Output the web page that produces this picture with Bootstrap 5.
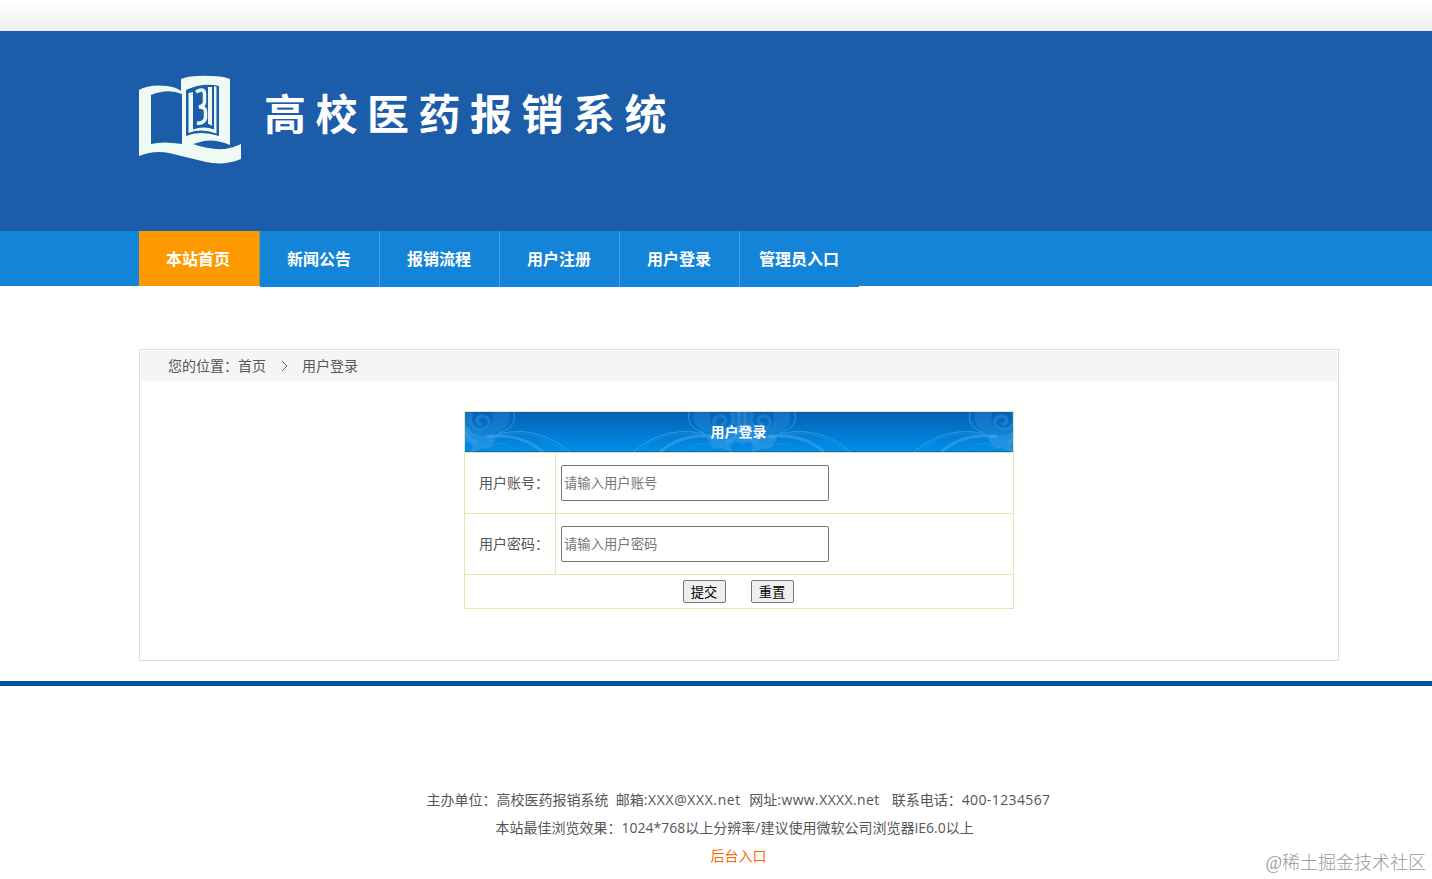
<!DOCTYPE html>
<html lang="zh-CN">
<head>
<meta charset="utf-8">
<meta name="viewport" content="width=device-width, initial-scale=1">
<title>高校医药报销系统</title>
<link href="https://cdn.jsdelivr.net/npm/bootstrap@5.3.0/dist/css/bootstrap.min.css" rel="stylesheet">
<style>
body{font:14px/28px "Open Sans","Noto Sans CJK SC",sans-serif;color:#555;height:879px;overflow:hidden;background:#fff}
.page-w{width:1200px;margin-left:139px}
.topbar{height:31px;background:linear-gradient(#fff,#eee)}
.masthead{height:200px;background:#1b5da8}
.site-title{font:700 42px/60px "Noto Sans CJK SC",sans-serif;letter-spacing:9.5px;color:#fff;margin:51px 0 0 23px;white-space:nowrap}
.logo{margin-top:44px}
.menu{height:55px;background:#1384d7}
.menu .nav-link{width:120px;height:56px;padding:0 1px 0 0;font:700 16px/54px "Noto Sans CJK SC",sans-serif;color:#fff;text-align:center;background:#1384d7;border-right:1px solid #43a3e8;border-radius:0}
.menu .nav-link.active{background:#f90;height:55px;width:121px;padding-right:2px;border-color:#8a9b68}
.menu .nav-link:last-child{border-right:0;width:119px}
.panel{height:312px;margin-top:63px;border:1px solid #ddd}
.crumbs{height:30px;margin:1px;padding-left:27px;background:#f5f5f5;color:#555}
.crumbs span{line-height:28px;margin-top:-1px}
.crumbs svg{margin:0 14px 0 15px}
.login{width:550px;height:198px;margin:30px auto 0;border:1px solid #e3e6b4;position:relative}
.login-head{height:40px;background:linear-gradient(#0561b4,#018ee9);border-bottom:1px solid #0967b2}
.login-head svg{inset:0;position:absolute}
.login-head strong{position:relative;display:block;line-height:39px;padding-right:1px;color:#fff}
.field-row{height:61px;border-bottom:1px solid #e3e6b4}
.login-head + .field-row{height:62px;border-top:1px solid #e3e6b4}
.field-row label{width:91px;height:60px;line-height:60px;padding-left:14px;border-right:1px solid #e3e6b4}
.field-row input{width:268px;height:36px;margin:0 0 0 5px;padding:1px 2px;border:1px solid #767676;border-radius:2px;font-size:13.333px;line-height:20px;color:#333}
.field-row input::placeholder{color:#757575;opacity:1}
.buttons{gap:25px;padding:5px 2px 0 0}
.btn-plain{width:43px;height:23px;padding:0;border:1px solid #767676;border-radius:2px;background:#efefef;color:#000;font-size:13.333px;line-height:22px}
.rule{height:5px;margin-top:20px;background:#00529b}
.foot{margin-top:100px;white-space:pre;padding-right:1px}
.foot a{color:#ff6600;text-decoration:none}
.mail{letter-spacing:.6px}
.site{letter-spacing:.38px}
.l2{padding-right:4px}
.watermark{right:6px;top:848px;font:300 18px/30px "Liberation Serif","Noto Sans CJK SC",serif;color:#999}
</style>
</head>
<body>
<div class="topbar"></div>
<header class="masthead">
  <div class="page-w d-flex align-items-start">
    <svg class="logo" width="102" height="90" viewBox="0 0 102 90" fill="#f0faf5">
      <path fill-rule="evenodd" d="M0 15Q10 9 28 11Q37 12 42 16V4Q52 0 72 1Q84 1 91 4V70Q77 64 65 66L54 69Q70 75 86 74Q94 73 102 69V84Q85 91 67 87L30 78Q15 75 0 81ZM12 20V69Q24 66 43 69V19Q29 13 12 20ZM47 15V61Q61 55 80 61V11Q64 7 47 15Z"/>
      <path d="M49.500 18L54 17V54.500Q65 50.500 75 54.500V11L77.500 12V58.500Q62 53 49.500 58Z"/>
      <path fill="none" stroke="#f0faf5" stroke-width="3.500" d="M57 17Q66 12 65.500 20V27Q65 31 60 32Q67 32 66.500 37V43Q65 49 58 48"/>
      <path d="M69 12L73 12V51Q71 49 69 49Z"/>
    </svg>
    <h1 class="site-title">高校医药报销系统</h1>
  </div>
</header>
<nav class="menu">
  <div class="page-w nav flex-nowrap align-items-start">
    <a class="nav-link active" href="#">本站首页</a><a class="nav-link" href="#">新闻公告</a><a class="nav-link" href="#">报销流程</a><a class="nav-link" href="#">用户注册</a><a class="nav-link" href="#">用户登录</a><a class="nav-link" href="#">管理员入口</a>
  </div>
</nav>
<main class="page-w panel">
  <div class="crumbs d-flex align-items-center"><span>您的位置：首页</span><svg width="7" height="12" viewBox="0 0 7 12" fill="none" stroke="#666"><path d="M1 1l5 5-5 5"/></svg><span>用户登录</span></div>
  <form class="login">
    <div class="login-head text-center">
      <svg width="548" height="40" viewBox="4 0 548 40">
        <defs>
          <g id="swirl" fill="none" stroke="#50adf0">
            <path fill="#4ba5e6" stroke="none" opacity=".42" d="M0 14Q8 12 10 20Q21 27 29 22Q38 25 32 31Q29 39 21 36L12 40H9Q15 32 5 30L0 33Z"/>
            <path fill="#4ba5e6" stroke="none" opacity=".22" d="M0 0H10Q6 8 11 15Q17 21 26 17Q34 12 31 0H48Q51 14 37 20L24 25L0 22Z"/>
            <path stroke-width="3" opacity=".3" d="M11 1C6 10 13 19 21 17C32 15 29 3 21 4C14 5 15 13 21 12M3 0V17Q7 29 16 30"/>
            <path stroke-width="3" opacity=".45" d="M26 25Q59 20 82 40"/>
            <path stroke-width="1" opacity=".6" d="M30 24Q74 10 109 40M53 0Q57 15 38 21"/>
            <path stroke-width="1" opacity=".3" d="M37 24Q76 15 104 40M30 34Q43 27 54 38"/>
          </g>
        </defs>
        <use href="#swirl"/><use href="#swirl" transform="translate(281)scale(-1 1)"/><use href="#swirl" transform="translate(281)"/><use href="#swirl" transform="translate(562)scale(-1 1)"/>
      </svg>
      <strong>用户登录</strong>
    </div>
    <div class="field-row d-flex align-items-center"><label for="account">用户账号：</label><input id="account" type="text" placeholder="请输入用户账号"></div>
    <div class="field-row d-flex align-items-center"><label for="secret">用户密码：</label><input id="secret" type="password" placeholder="请输入用户密码"></div>
    <div class="buttons d-flex justify-content-center"><button class="btn-plain" type="button">提交</button><button class="btn-plain" type="reset">重置</button></div>
  </form>
</main>
<div class="rule"></div>
<footer class="page-w foot text-center"><div>主办单位：高校医药报销系统  邮箱<span class="mail">:XXX@XXX.net  </span>网址<span class="site">:www.XXXX.net   </span>联系电话：<span class="site">400-1234567</span></div><div class="l2">本站最佳浏览效果：1024*768以上分辨率/建议使用微软公司浏览器IE6.0以上 </div><div><a href="#">后台入口</a></div></footer>
<div class="watermark position-absolute">@稀土掘金技术社区</div>
</body>
</html>
